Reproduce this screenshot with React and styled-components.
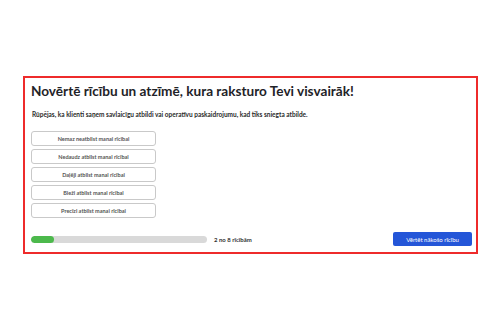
import React from 'react'
import styled, { createGlobalStyle } from 'styled-components'

const Global = createGlobalStyle`
  body {
    margin: 0;
    background: #ffffff;
    font-family: "Lato", "Open Sans", sans-serif;
  }
`

const Page = styled.div`
  padding: 76px 22px 0 23px;
`

const Card = styled.section`
  width: 455px;
  height: 178px;
  box-sizing: border-box;
  border: 2px solid #ee2b2b;
  padding: 4px 4px 0 6px;
  display: flex;
  flex-direction: column;
`

const Title = styled.h1`
  margin: 0;
  font-size: 13.6px;
  line-height: 18px;
  font-weight: 700;
  color: #1f2328;
`

const Lead = styled.p`
  margin: 11px 0 0 1px;
  font-size: 6.5px;
  line-height: 8px;
  font-weight: 700;
  color: #2b2b2b;
`

const Options = styled.div`
  display: flex;
  flex-direction: column;
  gap: 3px;
  margin-top: 12px;
`

const Option = styled.button`
  width: 125px;
  height: 15px;
  padding: 0;
  box-sizing: border-box;
  border: 1px solid #c9c9c9;
  border-radius: 3px;
  background: #ffffff;
  font-family: inherit;
  font-size: 5.5px;
  font-weight: 700;
  color: #555;
  text-align: center;
`

const Footer = styled.div`
  display: flex;
  align-items: center;
  margin-top: 14px;
`

const Track = styled.div`
  width: 176px;
  height: 7px;
  border-radius: 4px;
  background: #d9d9d9;
  overflow: hidden;
`

const Fill = styled.div`
  height: 100%;
  background: #4cb94c;
  border-radius: 4px;
`

const Count = styled.span`
  margin-left: 7px;
  font-size: 6px;
  font-weight: 700;
  color: #333;
`

const Next = styled.button`
  margin-left: auto;
  width: 79px;
  height: 14px;
  padding: 0;
  border: none;
  border-radius: 2px;
  background: #2456d8;
  color: #ffffff;
  font-family: inherit;
  font-size: 6px;
  font-weight: 400;
`

const options = [
  'Nemaz neatbilst manai rīcībai',
  'Nedaudz atbilst manai rīcībai',
  'Daļēji atbilst manai rīcībai',
  'Bieži atbilst manai rīcībai',
  'Precīzi atbilst manai rīcībai',
]

export default function App() {
  return (
    <>
      <Global />
      <Page>
        <Card>
          <Title>Novērtē rīcību un atzīmē, kura raksturo Tevi visvairāk!</Title>
          <Lead>
            Rūpējas, ka klienti saņem savlaicīgu atbildi vai operatīvu paskaidrojumu, kad tiks sniegta atbilde.
          </Lead>
          <Options>
            {options.map((o) => (
              <Option key={o}>{o}</Option>
            ))}
          </Options>
          <Footer>
            <Track>
              <Fill style={{ width: '13%' }} />
            </Track>
            <Count>2 no 8 rīcībām</Count>
            <Next>Vērtēt nākošo rīcību</Next>
          </Footer>
        </Card>
      </Page>
    </>
  )
}
